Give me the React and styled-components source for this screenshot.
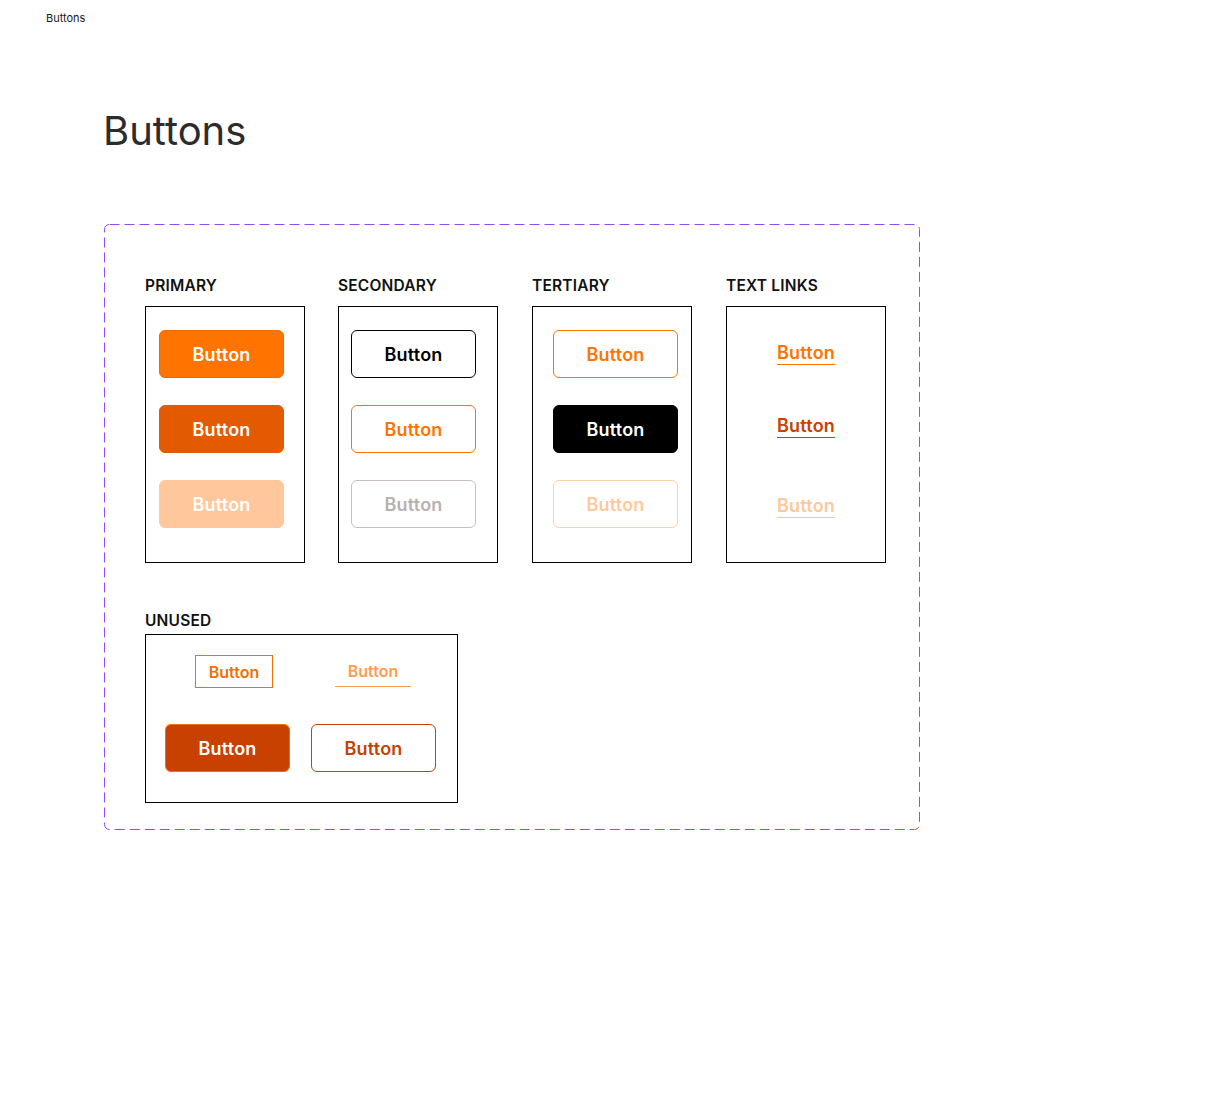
import React from "react";
import styled, { createGlobalStyle, css } from "styled-components";

const GlobalStyle = createGlobalStyle`
  body {
    margin: 0;
    background: #ffffff;
    font-family: Inter, "Noto Sans", sans-serif;
  }
`;

const palette = {
  orange: "#ff7300",
  orangeEdge: "#ec6a00",
  pressed: "#e35a00",
  faded: "#ffc89c",
  fadedEdge: "#ffd1ab",
  rust: "#c84100",
  grey: "#b9b1ad",
  greyEdge: "#c8c1bd",
  black: "#000000",
  purple: "#9747ff"
};

const variants = {
  solid: css`
    background: ${p => p.$bg};
    border: 1px solid ${p => p.$edge || p.$bg};
    color: #ffffff;
  `,
  outline: css`
    background: #ffffff;
    border: 1px solid ${p => p.$edge};
    color: ${p => p.$fg};
  `
};

const sections = [
  {
    title: "PRIMARY",
    inset: 13,
    buttons: [
      { kind: "solid", bg: palette.orange, edge: palette.orangeEdge },
      { kind: "solid", bg: palette.pressed },
      { kind: "solid", bg: palette.faded }
    ]
  },
  {
    title: "SECONDARY",
    inset: 12,
    buttons: [
      { kind: "outline", edge: palette.black, fg: palette.black },
      { kind: "outline", edge: palette.orange, fg: palette.orange },
      { kind: "outline", edge: palette.greyEdge, fg: palette.grey }
    ]
  },
  {
    title: "TERTIARY",
    inset: 20,
    buttons: [
      { kind: "outline", edge: palette.orange, fg: palette.orange },
      { kind: "solid", bg: palette.black },
      { kind: "outline", edge: palette.fadedEdge, fg: palette.faded }
    ]
  }
];

const links = [
  { color: palette.orange, top: 35 },
  { color: palette.rust, top: 51 },
  { color: palette.faded, top: 58 }
];

function DashedEdge() {
  return (
    <Outline width="100%" height="100%" aria-hidden="true">
      <rect
        x="0.5"
        y="0.5"
        width="815"
        height="605"
        rx="5"
        fill="none"
        stroke={palette.purple}
        strokeWidth="1"
        strokeDasharray="10 5"
      />
    </Outline>
  );
}

export default function App() {
  return (
    <Page>
      <GlobalStyle />
      <CanvasLabel>Buttons</CanvasLabel>
      <Title>Buttons</Title>
      <Frame>
        <DashedEdge />
        <Row>
          {sections.map(section => (
            <Group key={section.title}>
              <GroupLabel>{section.title}</GroupLabel>
              <Panel $inset={section.inset}>
                {section.buttons.map((b, i) => (
                  <Btn
                    key={i}
                    $kind={b.kind}
                    $bg={b.bg}
                    $edge={b.edge}
                    $fg={b.fg}
                  >
                    Button
                  </Btn>
                ))}
              </Panel>
            </Group>
          ))}
          <Group>
            <GroupLabel>TEXT LINKS</GroupLabel>
            <LinkPanel>
              {links.map((l, i) => (
                <TextLink key={i} $color={l.color} $top={l.top}>
                  Button
                </TextLink>
              ))}
            </LinkPanel>
          </Group>
        </Row>

        <UnusedGroup>
          <GroupLabel $gap={4}>UNUSED</GroupLabel>
          <UnusedPanel>
            <SquareBtn>Button</SquareBtn>
            <LineBtn>Button</LineBtn>
            <Btn $kind="solid" $bg={palette.rust} $edge="#f07000">
              Button
            </Btn>
            <Btn $kind="outline" $edge={palette.rust} $fg={palette.rust}>
              Button
            </Btn>
          </UnusedPanel>
        </UnusedGroup>
      </Frame>
    </Page>
  );
}

const Page = styled.div`
  min-height: 1108px;
  padding-top: 12px;
  box-sizing: border-box;
`;

const CanvasLabel = styled.div`
  margin-left: 46px;
  font-size: 11px;
  line-height: 13px;
  color: #1a1a1a;
`;

const Title = styled.h1`
  margin: 83px 0 0 103px;
  font-size: 40px;
  line-height: 46px;
  font-weight: 400;
  color: #2c2c2c;
`;

const Frame = styled.section`
  position: relative;
  margin: 70px 0 0 104px;
  width: 816px;
  height: 606px;
  box-sizing: border-box;
  padding: 53px 0 0 41px;
`;

const Outline = styled.svg`
  position: absolute;
  inset: 0;
  pointer-events: none;
`;

const Row = styled.div`
  display: grid;
  grid-template-columns: 193px 194px 194px 160px;
`;

const Group = styled.div`
  display: flex;
  flex-direction: column;
  width: 160px;
`;

const GroupLabel = styled.div`
  font-size: 15.5px;
  line-height: 18px;
  font-weight: 600;
  letter-spacing: 0.2px;
  color: #111111;
  white-space: nowrap;
  margin-bottom: ${p => (p.$gap != null ? p.$gap : 11)}px;
`;

const Panel = styled.div`
  box-sizing: border-box;
  height: 257px;
  border: 1px solid #000;
  padding: 23px 0 0 ${p => p.$inset}px;
  display: flex;
  flex-direction: column;
  gap: 27px;
`;

const Btn = styled.div`
  box-sizing: border-box;
  width: 125px;
  height: 48px;
  border-radius: 6px;
  display: flex;
  align-items: center;
  justify-content: center;
  font-size: 18px;
  font-weight: 600;
  letter-spacing: 0.2px;
  ${p => variants[p.$kind]}
`;

const LinkPanel = styled.div`
  box-sizing: border-box;
  height: 257px;
  border: 1px solid #000;
  display: flex;
  flex-direction: column;
  align-items: center;
`;

const TextLink = styled.span`
  margin-top: ${p => p.$top}px;
  font-size: 18px;
  line-height: 22px;
  font-weight: 600;
  letter-spacing: 0.2px;
  color: ${p => p.$color};
  text-decoration: underline;
  text-decoration-thickness: 1px;
  text-underline-offset: 5px;
`;

const UnusedGroup = styled.div`
  margin-top: 49px;
  display: flex;
  flex-direction: column;
`;

const UnusedPanel = styled.div`
  box-sizing: border-box;
  width: 313px;
  height: 169px;
  border: 1px solid #000;
  padding: 20px 0 0 19px;
  display: grid;
  grid-template-columns: 125px 125px;
  grid-template-rows: 33px 48px;
  column-gap: 21px;
  row-gap: 36px;
`;

const SquareBtn = styled.div`
  box-sizing: border-box;
  margin-left: 30px;
  width: 78px;
  height: 33px;
  border: 1px solid #f07000;
  color: #f07000;
  display: flex;
  align-items: center;
  justify-content: center;
  font-size: 16px;
  font-weight: 600;
`;

const LineBtn = styled.div`
  box-sizing: border-box;
  margin-left: 24px;
  width: 76px;
  height: 32px;
  border-bottom: 1px solid #ff9d4f;
  color: #ff9d4f;
  display: flex;
  align-items: center;
  justify-content: center;
  font-size: 16px;
  font-weight: 600;
`;
